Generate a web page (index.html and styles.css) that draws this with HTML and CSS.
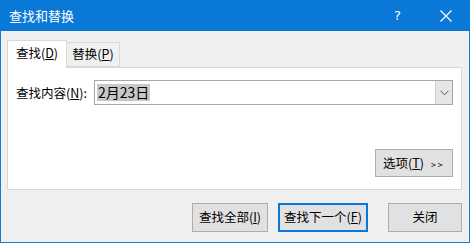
FILE: index.html
```html
<!DOCTYPE html>
<html lang="zh-CN">

<head>
  <meta charset="UTF-8">
  <meta name="viewport" content="width=device-width, initial-scale=1.0">
  <title>查找和替换</title>

  <link rel="stylesheet" href="styles.css">
</head>

<body>
  <div id="dialog">
    <div class="titlebar">
      <span class="title">查找和替换</span>
      <span class="help">?</span>
      <span class="close">
        <svg width="12" height="12" viewBox="0 0 12 12">
          <path d="M0.5 0.5 L11.5 11.5 M11.5 0.5 L0.5 11.5" stroke="#fff" stroke-width="1.2" fill="none"/>
        </svg>
      </span>
    </div>

    <div class="content">
      <ul class="tabs">
        <li class="tab active">查找(<u>D</u>)</li>
        <li class="tab">替换(<u>P</u>)</li>
      </ul>

      <div class="panel">
        <div class="row">
          <label for="findText">查找内容(<u>N</u>):</label>
          <div class="combo">
            <span id="findText" class="value"><span class="selected">2月23日</span></span>
            <span class="arrow">
              <svg width="9" height="6" viewBox="0 0 9 6">
                <path d="M0.5 0.8 L4.5 4.8 L8.5 0.8" stroke="#555" stroke-width="1" fill="none"/>
              </svg>
            </span>
          </div>
        </div>
        <button class="btn options">选项(<u>T</u>) <span class="more">&gt;&gt;</span></button>
      </div>

      <div class="actions">
        <button class="btn findAll">查找全部(<u>I</u>)</button>
        <button class="btn findNext default">查找下一个(<u>F</u>)</button>
        <button class="btn closeBtn">关闭</button>
      </div>
    </div>
  </div>
</body>

</html>
```

FILE: styles.css
```css
body {
  margin: 0;
  font-family: "Noto Sans CJK SC", "Liberation Sans", sans-serif;
  font-size: 12px;
  color: #000;
}
#dialog {
  width: 470px;
  height: 243px;
  box-sizing: border-box;
  border: 1px solid #1979d4;
  border-top: none;
  background: #f0f0f0;
  display: flex;
  flex-direction: column;
}
.titlebar {
  height: 31px;
  margin: 0 -1px;
  background: #0a78d7;
  color: #fff;
  display: flex;
  align-items: center;
}
.title {
  font-size: 13px;
  padding-left: 9px;
  flex: 1;
}
.help {
  font-size: 13px;
  width: 12px;
  margin-right: 34px;
  font-family: "DejaVu Sans", sans-serif;
}
.close {
  display: flex;
  margin-right: 18px;
}

.content {
  padding: 9px 7px 0 6px;
  flex: 1;
  display: flex;
  flex-direction: column;
}
.tabs {
  list-style: none;
  margin: 0;
  padding: 0;
  display: flex;
  align-items: flex-end;
  height: 28px;
  position: relative;
  z-index: 1;
}
.tab {
  height: 25px;
  padding: 0;
  box-sizing: border-box;
  border: 1px solid #d9d9d9;
  border-left: none;
  background: #f0f0f0;
  display: flex;
  align-items: center;
  justify-content: center;
  white-space: nowrap;
  line-height: 1;
  font-size: 12.5px;
}
.tab.active {
  height: 28px;
  width: 60px;
  border-left: 1px solid #d9d9d9;
  border-bottom: none;
  background: #fff;
  padding-bottom: 2px;
}
.tab:not(.active) {
  margin-bottom: 1px;
  width: 53px;
}
.panel {
  margin-top: -1px;
  height: 123px;
  box-sizing: border-box;
  border: 1px solid #d9d9d9;
  background: #fff;
  padding: 12px 8px 12px 8px;
  display: flex;
  flex-direction: column;
}
.row {
  display: flex;
  align-items: center;
}
.row label {
  width: 78px;
  font-size: 12.5px;
}
.combo {
  width: 359px;
  height: 25px;
  box-sizing: border-box;
  border: 1px solid #a6a6a6;
  display: flex;
}
.value {
  flex: 1;
  padding-left: 2px;
  display: flex;
  align-items: center;
  font-size: 14px;
}
.selected {
  background: #c8c8c8;
  padding: 0 1px;
  line-height: 17px;
}
.arrow {
  width: 16px;
  background: #e6e6e6;
  border-left: 1px solid #cfcfcf;
  display: flex;
  align-items: center;
  justify-content: center;
}

.btn {
  font-family: inherit;
  font-size: 12.5px;
  background: #e1e1e1;
  border: 1px solid #adadad;
  padding: 0;
  color: #000;
  line-height: 1;
  white-space: nowrap;
}
.more {
  font-size: 9px;
  letter-spacing: 2px;
  margin-left: 4px;
}
.options {
  margin-top: auto;
  align-self: flex-end;
  width: 78px;
  height: 28px;
}
.actions {
  display: flex;
  justify-content: flex-end;
  margin-top: 13px;
}
.findAll {
  width: 76px;
  height: 29px;
}
.findNext {
  width: 90px;
  height: 29px;
  margin-left: 10px;
}
.default {
  border: 2px solid #0a78d7;
}
.closeBtn {
  width: 74px;
  height: 29px;
  margin-left: 20px;
}
```
